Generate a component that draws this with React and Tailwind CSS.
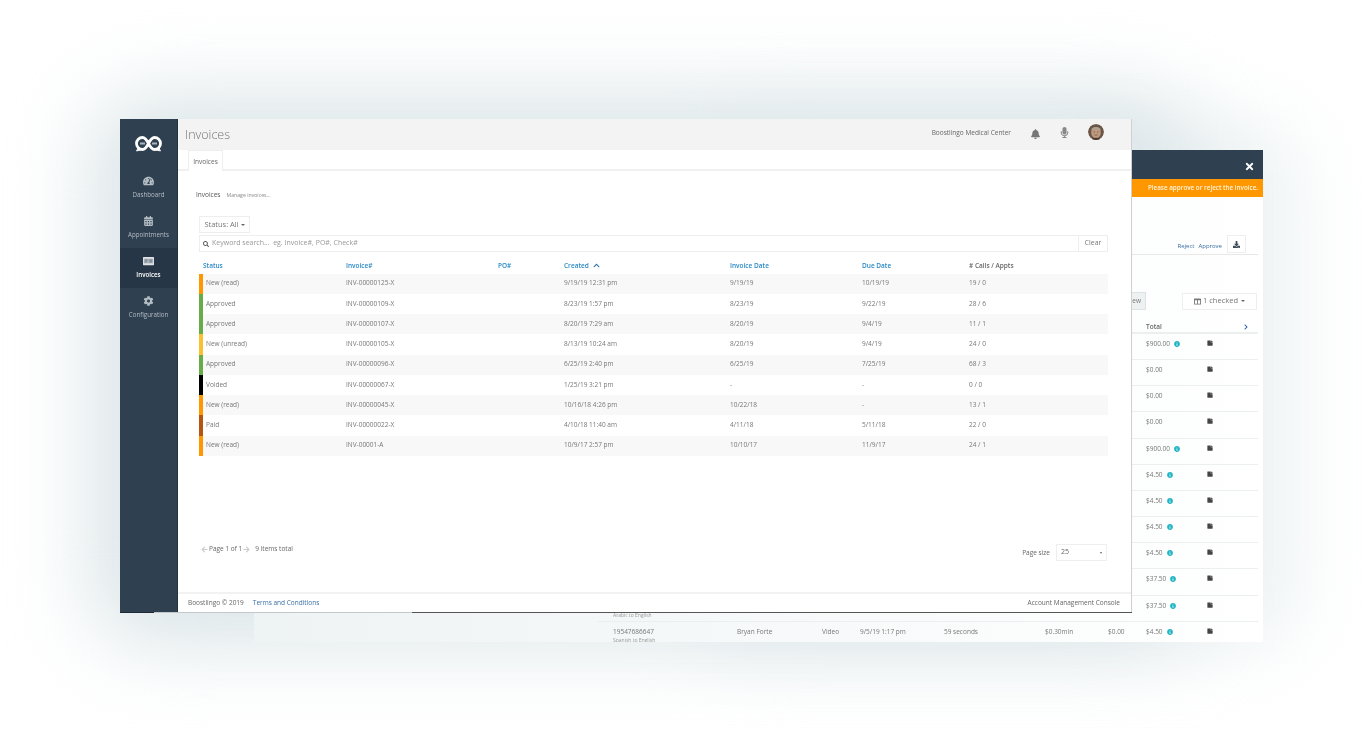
import React from "react";
import {
  FaTachometerAlt, FaCalendarAlt, FaCog, FaBell, FaMicrophone, FaTimes, FaSearch,
  FaDownload, FaStickyNote, FaInfoCircle, FaChevronRight, FaChevronUp, FaArrowLeft, FaArrowRight, FaColumns,
} from "react-icons/fa";

const font = "font-['Open_Sans',sans-serif]";

function BillIcon({ className }) {
  return (
    <svg viewBox="0 0 12 9" className={className}>
      <rect x="0" y="0" width="12" height="9" rx="0.6" fill="#dfe3e6" />
      <rect x="1" y="2" width="10" height="5" fill="#aab2ba" />
      <path d="M2 3.5H5M2 5.5H4M7 3.5H10M7 5.5H10" stroke="#4a5a69" strokeWidth="0.7" />
    </svg>
  );
}

const nav = [
  { label: "Dashboard", Icon: FaTachometerAlt },
  { label: "Appointments", Icon: FaCalendarAlt },
  { label: "Invoices", Icon: BillIcon, active: true },
  { label: "Configuration", Icon: FaCog },
];

const invoices = [
  ["New (read)", "INV-00000125-X", "9/19/19 12:31 pm", "9/19/19", "10/19/19", "19 / 0", "bg-[#ff9800]"],
  ["Approved", "INV-00000109-X", "8/23/19 1:57 pm", "8/23/19", "9/22/19", "28 / 6", "bg-[#66ad47]"],
  ["Approved", "INV-00000107-X", "8/20/19 7:29 am", "8/20/19", "9/4/19", "11 / 1", "bg-[#66ad47]"],
  ["New (unread)", "INV-00000105-X", "8/13/19 10:24 am", "8/20/19", "9/4/19", "24 / 0", "bg-[#fbc02d]"],
  ["Approved", "INV-00000096-X", "6/25/19 2:40 pm", "6/25/19", "7/25/19", "68 / 3", "bg-[#66ad47]"],
  ["Voided", "INV-00000067-X", "1/25/19 3:21 pm", "-", "-", "0 / 0", "bg-black"],
  ["New (read)", "INV-00000045-X", "10/16/18 4:26 pm", "10/22/18", "-", "13 / 1", "bg-[#ff9800]"],
  ["Paid", "INV-00000022-X", "4/10/18 11:40 am", "4/11/18", "5/11/18", "22 / 0", "bg-[#b5540f]"],
  ["New (read)", "INV-00001-A", "10/9/17 2:57 pm", "10/10/17", "11/9/17", "24 / 1", "bg-[#ff9800]"],
];

const backRows = [
  ["$900.00", true], ["$0.00", false], ["$0.00", false], ["$0.00", false], ["$900.00", true],
  ["$4.50", true], ["$4.50", true], ["$4.50", true], ["$4.50", true], ["$37.50", true], ["$37.50", true],
];

const cols = "grid grid-cols-[147px_152px_66px_166px_132px_107px_1fr]";

function Logo() {
  return (
    <svg width="27" height="17" viewBox="0 0 27 17" fill="none">
      <path d="M13.5 8.5C11.5 4.5 10 2.5 7.5 2.5A6 6 0 0 0 7.5 14.5C10 14.5 11.5 12.5 13.5 8.5C15.5 4.5 17 2.5 19.5 2.5A6 6 0 0 1 19.5 14.5C17 14.5 15.5 12.5 13.5 8.5Z" stroke="#fff" strokeWidth="2.8" />
      <path d="M3 13L1.5 16L6 15M24 13L25.5 16L21 15" fill="#fff" stroke="#fff" strokeWidth="0.8" />
      <path d="M5 8.5H10M17 8.5H22" stroke="#aeb7bf" strokeWidth="2" />
    </svg>
  );
}

function Avatar() {
  return (
    <svg width="16" height="16" viewBox="0 0 16 16" className="rounded-full">
      <circle cx="8" cy="8" r="8" fill="#6a5546" />
      <ellipse cx="8" cy="8.5" rx="4.8" ry="5.6" fill="#c09a80" />
      <path d="M3 6C4 2 12 2 13 6C10.5 4.5 6 4.5 3 6Z" fill="#a8a298" />
      <path d="M5.5 8H7M9 8H10.5M6.5 11H9.5" stroke="#6a4c3a" strokeWidth="0.7" />
      <path d="M3 16C4 13 12 13 13 16Z" fill="#4a3a30" />
    </svg>
  );
}

function BackWindow() {
  return (
    <div className="absolute left-[254px] top-[150px] w-[1009px] h-[492px] overflow-hidden flex flex-col bg-gradient-to-r from-[#eef3f4] to-white text-[#777]">
      <div className="h-[29px] shrink-0 bg-[#2f4050] flex items-center justify-end pr-[8px] pt-[3px]">
        <FaTimes className="text-white w-[11px] h-[11px]" />
      </div>
      <div className="h-[18px] shrink-0 bg-[#ff9800] flex items-center justify-end pr-[5px] text-[6.3px] font-semibold text-[#fff3dc]">
        Please approve or reject the invoice.
      </div>
      <div className="ml-[344px] mr-[5px] mt-[38px] h-[18px] flex items-center justify-end gap-[4px] border-b border-[#e8e8e8] box-content pb-[1px]">
        <span className="text-[6px] text-[#3b6ea5] pt-[4px]">Reject</span>
        <span className="text-[6px] text-[#3b6ea5] pt-[4px]">Approve</span>
        <span className="ml-[1px] mr-[12px] w-[19px] h-[18px] bg-white border border-[#eee] flex items-center justify-center">
          <FaDownload className="w-[7px] h-[7px] text-[#3d4a57]" />
        </span>
      </div>
      <div className="ml-[344px] mr-[6px] mt-[37px] h-[18px] flex items-center justify-end gap-[36px]">
        <span className="h-[18px] w-[30px] bg-[#eef1f1] border border-[#dde2e2] text-[6.5px] flex items-center justify-end pr-[4px]">View</span>
        <span className="h-[17px] w-[75px] bg-white border border-[#eee] flex items-center justify-center gap-[2px] text-[7.5px]">
          <FaColumns className="w-[7px] h-[7px]" /> 1 checked
          <span className="ml-[1px] border-x-[2px] border-t-[2px] border-x-transparent border-t-[#666]" />
        </span>
      </div>
      <div className="ml-[344px] mr-[5px] mt-[12px] h-[19px] flex items-center border-b-2 border-[#eceff0] box-border">
        <span className="ml-[548px] text-[6.5px] font-semibold text-[#666]">Total</span>
        <FaChevronRight className="ml-[81px] w-[6px] h-[6px] text-[#2a62a8]" />
      </div>
      {backRows.map(([total, info], i) => (
        <div key={i} className="ml-[344px] mr-[5px] h-[26.2px] shrink-0 border-b border-[#eceff0] pt-[5px] flex text-[6.5px]">
          <span className="w-[548px] pl-[15px] pt-[11px] text-[5px] text-[#999]">{i === 10 ? "Arabic to English" : ""}</span>
          <span className="flex-1 flex items-start gap-[4px]">
            {total}
            {info && <FaInfoCircle className="w-[6px] h-[6px] mt-[2px] text-[#1fb5c4]" />}
          </span>
          <span className="w-[51px] pt-[1px]"><FaStickyNote className="w-[6px] h-[6px] -scale-y-100 text-[#444]" /></span>
        </div>
      ))}
      <div className="ml-[344px] mr-[5px] h-[26px] shrink-0 pt-[5px] flex text-[6.5px]">
        <div className="w-[139px] pl-[15px]">
          <div>19547686647</div>
          <div className="text-[5px] leading-[6px] text-[#999]">Spanish to English</div>
        </div>
        <span className="w-[85px]">Bryan Forte</span>
        <span className="w-[38px]">Video</span>
        <span className="w-[84px]">9/5/19 1:17 pm</span>
        <span className="w-[101px]">59 seconds</span>
        <span className="w-[63px]">$0.30min</span>
        <span className="w-[38px]">$0.00</span>
        <span className="flex-1 flex items-start gap-[4px]">
          $4.50 <FaInfoCircle className="w-[6px] h-[6px] mt-[2px] text-[#1fb5c4]" />
        </span>
        <span className="w-[51px] pt-[1px]"><FaStickyNote className="w-[6px] h-[6px] -scale-y-100 text-[#444]" /></span>
      </div>
    </div>
  );
}

function Sidebar() {
  return (
    <aside className="w-[58px] shrink-0 bg-[#2f4050] flex flex-col border-r border-[#223040]">
      <div className="h-[33px] flex items-end justify-center"><Logo /></div>
      <nav className="mt-[16px] flex flex-col">
        {nav.map(({ label, Icon, active }) => (
          <div key={label} className={`h-[40px] flex flex-col items-center justify-center gap-[4px] text-[6.2px] ${active ? "bg-[#273646] text-white font-semibold" : "text-[#b4bcc4]"}`}>
            <Icon className="w-[11px] h-[10px]" />
            <span>{label}</span>
          </div>
        ))}
      </nav>
    </aside>
  );
}

function InvoicesTable() {
  return (
    <div>
      <div className={`${cols} h-[21.5px] pt-[6px] items-center text-[6.5px] font-semibold text-[#2a8ac6]`}>
        <span className="pl-[4px]">Status</span>
        <span>Invoice#</span>
        <span>PO#</span>
        <span className="flex items-center gap-[4px]">Created <FaChevronUp className="w-[7px] h-[7px] text-[#2a6fa8]" /></span>
        <span>Invoice Date</span>
        <span>Due Date</span>
        <span className="text-[#666]"># Calls / Appts</span>
      </div>
      {invoices.map(([status, id, created, date, due, calls, color], i) => (
        <div key={id} className={`${cols} relative h-[20.25px] items-center pb-[1px] text-[6.5px] text-[#777] ${i % 2 === 0 ? "bg-[#f8f8f8]" : "bg-white"}`}>
          <span className={`absolute left-0 top-0 bottom-0 w-[4px] ${color}`} />
          <span className="pl-[7px]">{status}</span>
          <span>{id}</span>
          <span />
          <span>{created}</span>
          <span>{date}</span>
          <span>{due}</span>
          <span>{calls}</span>
        </div>
      ))}
    </div>
  );
}

function MainWindow() {
  return (
    <div className="absolute left-[120px] top-[119px] w-[1012px] h-[494px] flex bg-white border-r border-[#d0d0d0]">
      <Sidebar />
      <main className="flex-1 min-w-0 flex flex-col">
        <header className="h-[31px] shrink-0 bg-[#f3f3f3] flex items-center pl-[7px] pr-[27px]">
          <h1 className="text-[12.5px] font-light text-[#777] pt-[1px]">Invoices</h1>
          <span className="ml-auto text-[6.5px] text-[#666] pb-[3px]">Boostlingo Medical Center</span>
          <FaBell className="ml-[20px] w-[9px] h-[10px] text-[#777] -mt-[1px]" />
          <FaMicrophone className="ml-[20px] w-[9px] h-[11px] text-[#888] -mt-[5px]" />
          <span className="ml-[19px] flex -mt-[5px]"><Avatar /></span>
        </header>
        <div className="h-[21px] shrink-0 pl-[10px] border-b-2 border-[#f0f0f0] flex">
          <span className="w-[35px] h-[21px] pt-[1px] border border-b-0 border-[#eee] bg-white flex items-center justify-center text-[6.5px] text-[#666]">Invoices</span>
        </div>
        <div className="flex-1 min-h-0 pl-[21px] pr-[23px] flex flex-col">
          <div className="mt-[19px] -ml-[3px] h-[10px] flex items-baseline gap-[6px]">
            <span className="text-[6.5px] text-[#555]">Invoices</span>
            <span className="text-[5.2px] text-[#888]">Manage invoices...</span>
          </div>
          <div className="mt-[16px] w-[51px] h-[17px] bg-white border border-[#eee] flex items-center justify-center gap-[2px] text-[7.5px] text-[#777]">
            Status: All
            <span className="border-x-[2px] border-t-[2px] border-x-transparent border-t-[#666]" />
          </div>
          <div className="mt-[2px] h-[17px] border border-[#eee] flex items-center text-[7px] text-[#999]">
            <FaSearch className="ml-[3px] w-[6px] h-[6px] text-[#555]" />
            <span className="ml-[3px] flex-1">Keyword search...&nbsp; eg. Invoice#, PO#, Check#</span>
            <span className="w-[29px] h-full border-l border-[#eee] flex items-center justify-center text-[#777]">Clear</span>
          </div>
          <InvoicesTable />
          <div className="mt-auto pb-[31px] flex items-center text-[6.5px] text-[#666]">
            <span className="flex items-center mb-[7px]">
              <FaArrowLeft className="ml-[2px] w-[7px] h-[7px] text-[#ccc]" />
              <span className="ml-[1px]">Page 1 of 1</span>
              <FaArrowRight className="ml-[1px] w-[7px] h-[7px] text-[#ccc]" />
              <span className="ml-[5px]">9 items total</span>
            </span>
            <span className="ml-auto">Page size</span>
            <span className="ml-[6px] mr-[1px] w-[51px] h-[17px] border border-[#eee] flex items-center justify-between px-[4px] text-[7px]">
              25
              <span className="border-x-[1.5px] border-t-[2px] border-x-transparent border-t-[#666]" />
            </span>
          </div>
        </div>
        <footer className="h-[21px] shrink-0 border-t-2 border-[#f2f2f2] flex items-center pl-[10px] pr-[11px] pb-[1px] text-[6.5px] text-[#666]">
          <span>Boostlingo © 2019</span>
          <span className="ml-[9px] text-[#3b6ea5]">Terms and Conditions</span>
          <span className="ml-auto">Account Management Console</span>
        </footer>
      </main>
      <span className="absolute left-0 w-[34px] bottom-0 h-px bg-[#1f2a36]" />
      <span className="absolute left-[34px] w-[258px] bottom-0 h-px bg-[#c4c8c8]" />
      <span className="absolute left-[292px] -right-px bottom-0 h-px bg-[#555]" />
    </div>
  );
}

export default function App() {
  return (
    <div className={`${font} relative w-[1364px] h-[743px] overflow-hidden bg-white`}>
      <div className="absolute left-[700px] top-[120px] w-[600px] h-[530px] rounded-[60px] bg-[#eef3f4] blur-[35px]" />
      <div className="absolute left-[90px] top-[95px] w-[1100px] h-[550px] rounded-[60px] bg-[#dbe5e8] blur-[40px]" />
      <div className="absolute inset-0 blur-[0.35px] [will-change:transform]">
        <BackWindow />
        <MainWindow />
      </div>
    </div>
  );
}
